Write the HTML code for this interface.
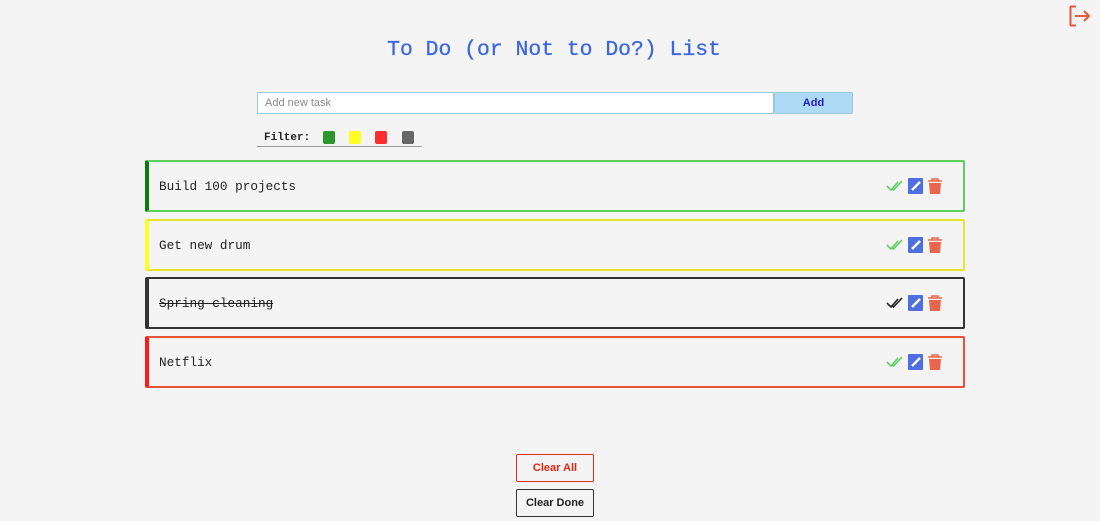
<!DOCTYPE html>
<html><head><style>
body{margin:0;width:1100px;height:521px;background:#f4f4f4;position:relative;overflow:hidden;font-family:"Liberation Sans",sans-serif}
h1{position:absolute;top:36px;left:4px;width:1100px;text-align:center;margin:0;font:21.4px "Liberation Mono",monospace;color:#3b67e0;line-height:28px;-webkit-text-stroke:0.3px #3b67e0}
.inp{position:absolute;left:257px;top:92px;width:508px;height:20px;border:1px solid #9cc9da;background:#fff;font-size:11px;color:#888;line-height:20px;padding-left:7px;box-sizing:content-box}
.add{position:absolute;left:774px;top:92px;width:79px;height:22px;background:#aedaf5;border:1px solid #9cc9da;box-sizing:border-box;color:#1d1dc8;font-weight:bold;font-size:11px;text-align:center;line-height:21px;border-radius:2px}
.filter{position:absolute;left:257px;top:130px;width:165px;height:16px;border-bottom:1px solid #999;font:bold 11px "Liberation Mono",monospace;color:#222}
.filter span{position:absolute;top:1px;width:12px;height:13px;border-radius:2px}
.card{position:absolute;left:145px;width:820px;height:52px;box-sizing:border-box;border:2px solid;border-left-width:4px;border-radius:2px;background:#f4f4f4}
.card .t{position:absolute;left:10px;top:17px;font:12.7px "Liberation Mono",monospace;color:#222}
.ic{position:absolute;left:734px;top:14px}
.btn{position:absolute;left:516px;width:78px;height:28px;box-sizing:border-box;border:1px solid;border-radius:2px;font-weight:bold;font-size:11px;text-align:center;line-height:26px}
</style></head><body>
<svg style="position:absolute;left:1068px;top:5px" width="24" height="22" viewBox="0 0 24 22"><path d="M8 1.5H2.5V20.5H8M7 11H21M16 6L21 11L16 16" fill="none" stroke="#e55a3c" stroke-width="2" stroke-linejoin="round"/></svg>
<h1>To Do (or Not to Do?) List</h1>
<div class="inp">Add new task</div>
<div class="add">Add</div>
<div class="filter"><span style="position:static;width:auto;height:auto;padding-left:7px;line-height:16px">Filter:</span>
<span style="left:66px;background:#2d962d"></span><span style="left:92px;background:#ffff1f"></span><span style="left:118px;background:#ff2d2d"></span><span style="left:145px;background:#666"></span></div>

<div class="card" style="top:160px;border-color:#5ccf5c;border-left-color:#0a7a0a"><div class="t">Build 100 projects</div>
<svg class="ic" width="60" height="20"><path d="M4 10L8 14L15 6M9 12.5L10.5 14L19 5" fill="none" stroke="#5ccf5c" stroke-width="1.6"/><rect x="25" y="2" width="15" height="16" rx="1" fill="#4f6fe0"/><path d="M29 14L37 6" stroke="#fff" stroke-width="2.4"/><path d="M45 5H59M49 5V3H55V5" fill="none" stroke="#e8664d" stroke-width="1.6"/><path d="M46 7H58L57 18H47Z" fill="#e8664d"/></svg></div>

<div class="card" style="top:219px;border-color:#e5e52e;border-left-color:#ffff1f"><div class="t">Get new drum</div>
<svg class="ic" width="60" height="20"><path d="M4 10L8 14L15 6M9 12.5L10.5 14L19 5" fill="none" stroke="#5ccf5c" stroke-width="1.6"/><rect x="25" y="2" width="15" height="16" rx="1" fill="#4f6fe0"/><path d="M29 14L37 6" stroke="#fff" stroke-width="2.4"/><path d="M45 5H59M49 5V3H55V5" fill="none" stroke="#e8664d" stroke-width="1.6"/><path d="M46 7H58L57 18H47Z" fill="#e8664d"/></svg></div>

<div class="card" style="top:277px;border-color:#333;border-left-color:#333"><div class="t" style="text-decoration:line-through">Spring cleaning</div>
<svg class="ic" width="60" height="20"><path d="M4 10L8 14L15 6M9 12.5L10.5 14L19 5" fill="none" stroke="#222" stroke-width="1.6"/><rect x="25" y="2" width="15" height="16" rx="1" fill="#4f6fe0"/><path d="M29 14L37 6" stroke="#fff" stroke-width="2.4"/><path d="M45 5H59M49 5V3H55V5" fill="none" stroke="#e8664d" stroke-width="1.6"/><path d="M46 7H58L57 18H47Z" fill="#e8664d"/></svg></div>

<div class="card" style="top:336px;border-color:#e8533a;border-left-color:#ff1a1a"><div class="t">Netflix</div>
<svg class="ic" width="60" height="20"><path d="M4 10L8 14L15 6M9 12.5L10.5 14L19 5" fill="none" stroke="#5ccf5c" stroke-width="1.6"/><rect x="25" y="2" width="15" height="16" rx="1" fill="#4f6fe0"/><path d="M29 14L37 6" stroke="#fff" stroke-width="2.4"/><path d="M45 5H59M49 5V3H55V5" fill="none" stroke="#e8664d" stroke-width="1.6"/><path d="M46 7H58L57 18H47Z" fill="#e8664d"/></svg></div>

<div class="btn" style="top:454px;border-color:#d9301a;color:#e0240e">Clear All</div>
<div class="btn" style="top:489px;border-color:#333;color:#222">Clear Done</div>
</body></html>
